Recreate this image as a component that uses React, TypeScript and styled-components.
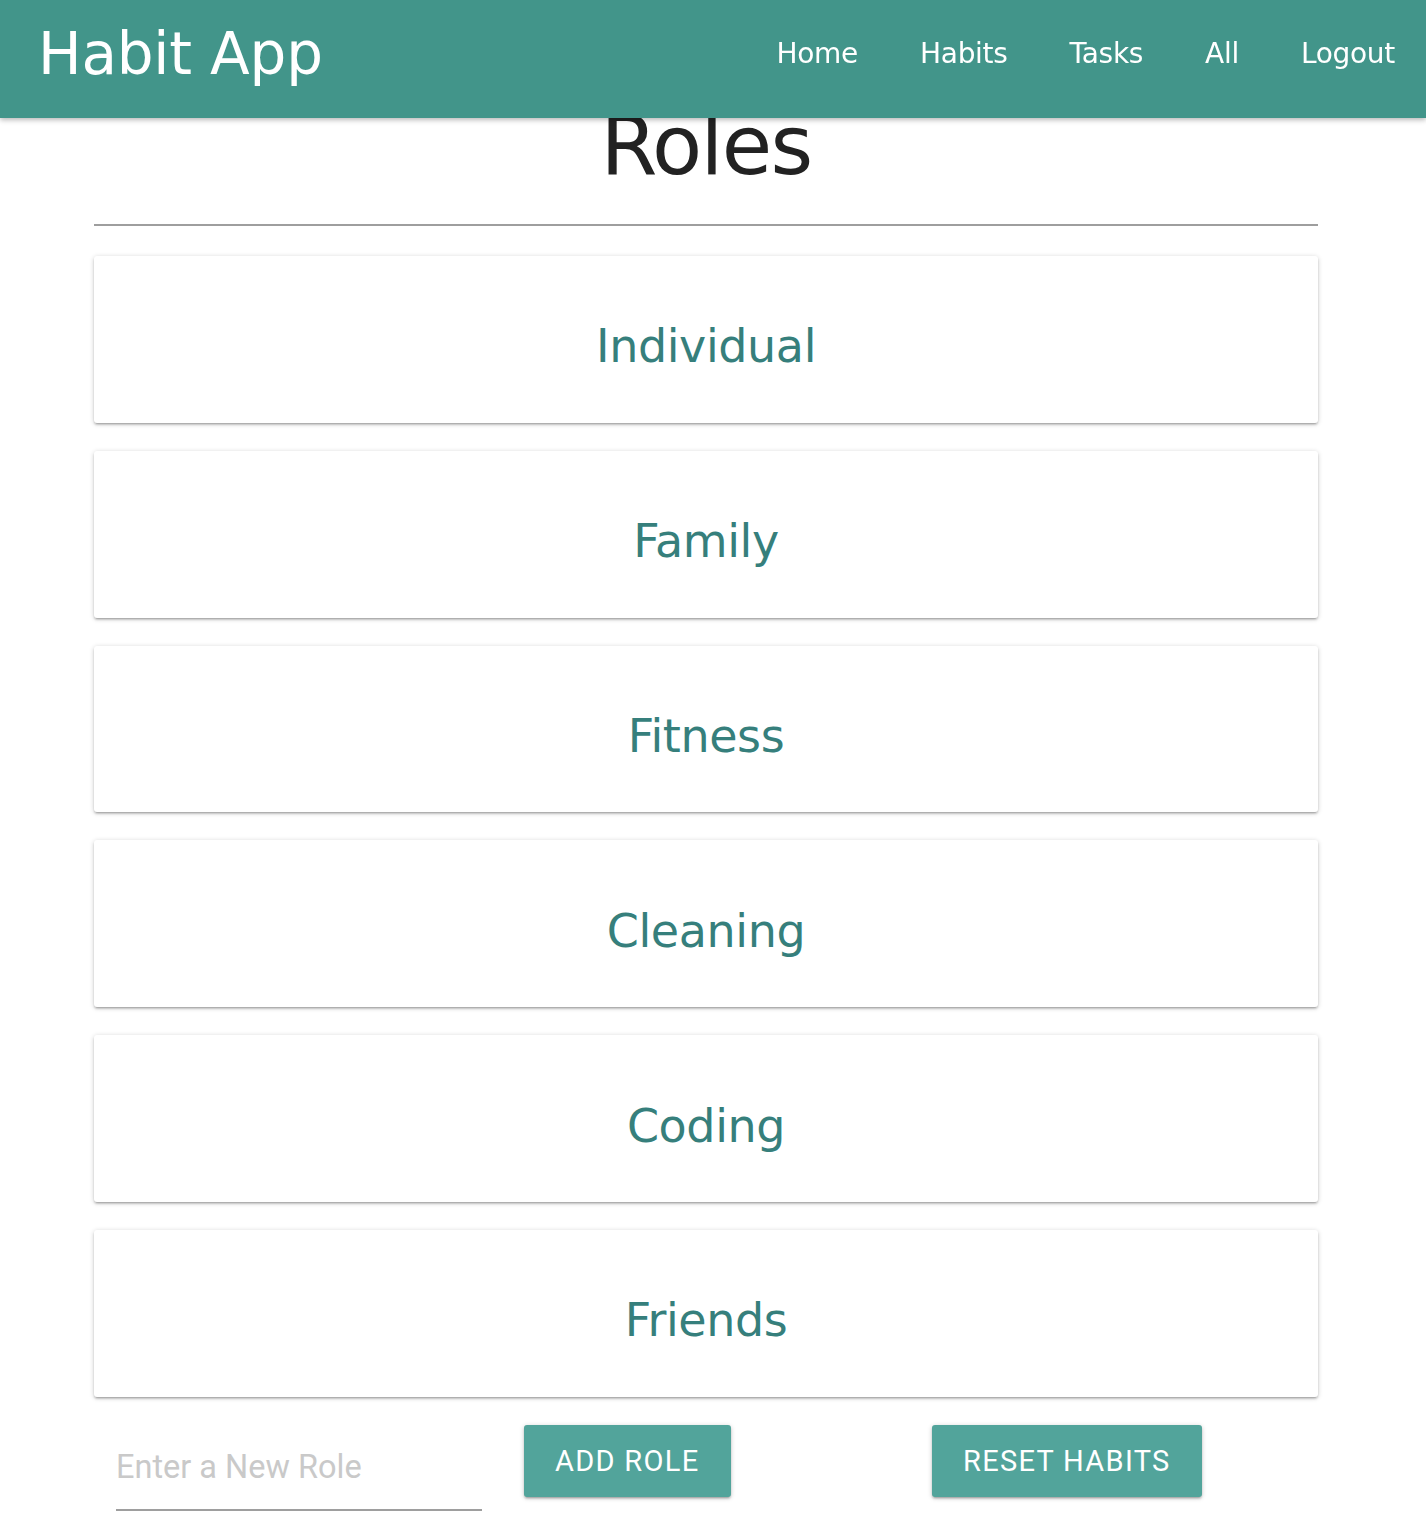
import React from "react";
import styled, { createGlobalStyle } from "styled-components";

const GlobalStyle = createGlobalStyle`
  html, body {
    margin: 0;
    padding: 0;
    background: #ffffff;
  }
  body {
    font-family: "DejaVu Sans", Verdana, sans-serif;
  }
  * { box-sizing: border-box; }
`;

const Header = styled.header`
  position: fixed;
  top: 0;
  left: 0;
  right: 0;
  height: 118px;
  background: #42958a;
  box-shadow: 0 2px 5px rgba(0, 0, 0, 0.28);
  display: flex;
  align-items: center;
  justify-content: space-between;
  padding: 0 31px 10px 38px;
  z-index: 10;
`;

const Brand = styled.a`
  color: #ffffff;
  font-family: "DejaVu Sans", sans-serif;
  font-size: 58px;
  letter-spacing: -0.2px;
  text-decoration: none;
  line-height: 1;
`;

const Nav = styled.nav`
  display: flex;
  align-items: center;
  gap: 62px;
`;

const NavLink = styled.a`
  color: #ffffff;
  font-family: "DejaVu Sans", sans-serif;
  font-size: 28px;
  letter-spacing: -0.3px;
  text-decoration: none;
  line-height: 1;
`;

const Main = styled.main`
  width: 1224px;
  margin-left: 94px;
  padding-top: 96px;
`;

const Title = styled.h1`
  margin: 0;
  text-align: center;
  color: #222222;
  font-family: "DejaVu Sans", sans-serif;
  font-weight: normal;
  font-size: 82px;
  letter-spacing: -1.7px;
  line-height: 100px;
`;

const Rule = styled.hr`
  margin: 28px 0 30px;
  border: none;
  border-top: 2px solid #9e9e9e;
`;

const CardList = styled.div`
  display: flex;
  flex-direction: column;
  gap: 28px;
`;

const Card = styled.div`
  height: 166.8px;
  background: #ffffff;
  border-radius: 3px;
  box-shadow: 0 2px 2px 0 rgba(0, 0, 0, 0.14), 0 3px 1px -2px rgba(0, 0, 0, 0.12),
    0 1px 5px 0 rgba(0, 0, 0, 0.2);
  display: flex;
  align-items: center;
  justify-content: center;
  padding-top: 14px;
`;

const CardTitle = styled.span`
  color: #367f7c;
  font-family: "DejaVu Sans", sans-serif;
  font-size: 46px;
  letter-spacing: -0.4px;
`;

const Controls = styled.div`
  display: grid;
  grid-template-columns: repeat(3, 408px);
  margin-top: 28px;
  padding-bottom: 20px;
`;

const Cell = styled.div`
  padding: 0 22px;
`;

const RoleInput = styled.input`
  display: block;
  width: 366px;
  height: 86px;
  margin: 0;
  padding: 0;
  border: none;
  border-bottom: 2px solid #9e9e9e;
  outline: none;
  font-family: Roboto, sans-serif;
  font-size: 32.5px;
  color: #333;
  background: transparent;
  &::placeholder {
    color: #c9c9c9;
  }
`;

const Button = styled.button`
  height: 72px;
  padding: 0 31px;
  border: none;
  border-radius: 3px;
  background: #52a49b;
  color: #ffffff;
  font-family: Roboto, sans-serif;
  font-size: 29px;
  letter-spacing: 1.3px;
  text-transform: uppercase;
  box-shadow: 0 2px 2px 0 rgba(0, 0, 0, 0.14), 0 3px 1px -2px rgba(0, 0, 0, 0.12),
    0 1px 5px 0 rgba(0, 0, 0, 0.2);
  cursor: pointer;
`;

const roles = ["Individual", "Family", "Fitness", "Cleaning", "Coding", "Friends"];
const links = ["Home", "Habits", "Tasks", "All", "Logout"];

export default function App() {
  return (
    <>
      <GlobalStyle />
      <Header>
        <Brand href="#">Habit App</Brand>
        <Nav>
          {links.map((l) => (
            <NavLink key={l} href="#">
              {l}
            </NavLink>
          ))}
        </Nav>
      </Header>
      <Main>
        <Title>Roles</Title>
        <Rule />
        <CardList>
          {roles.map((r) => (
            <Card key={r}>
              <CardTitle>{r}</CardTitle>
            </Card>
          ))}
        </CardList>
        <Controls>
          <Cell>
            <RoleInput placeholder="Enter a New Role" />
          </Cell>
          <Cell>
            <Button>Add Role</Button>
          </Cell>
          <Cell>
            <Button>Reset Habits</Button>
          </Cell>
        </Controls>
      </Main>
    </>
  );
}
